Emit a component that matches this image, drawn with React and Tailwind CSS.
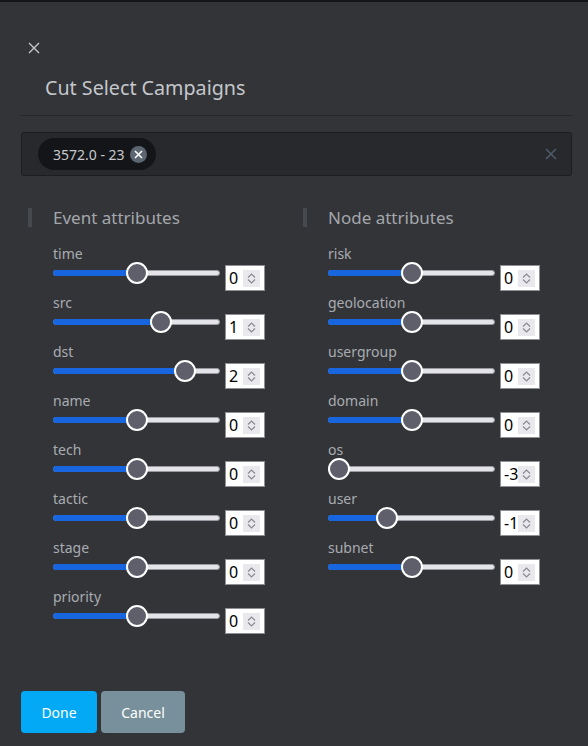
import React from "react";

const left = [
  ["time", 0],
  ["src", 1],
  ["dst", 2],
  ["name", 0],
  ["tech", 0],
  ["tactic", 0],
  ["stage", 0],
  ["priority", 0],
];
const right = [
  ["risk", 0],
  ["geolocation", 0],
  ["usergroup", 0],
  ["domain", 0],
  ["os", -3],
  ["user", -1],
  ["subnet", 0],
];

function Slider({ value }) {
  const center = 11 + ((value + 3) / 6) * 145;
  return (
    <div className="relative w-[167px] h-[24px]">
      <div className="absolute left-0 right-0 top-[9px] h-[6px] rounded-full bg-[#e3e3e8] border border-[#9a9aa3]" />
      <div
        className="absolute left-0 top-[9px] h-[6px] rounded-full bg-[#1766e0]"
        style={{ width: center }}
      />
      <div
        className="absolute top-[1px] w-[22px] h-[22px] rounded-full bg-[#5f5f6c] border-2 border-white"
        style={{ left: center - 11 }}
      />
    </div>
  );
}

function NumBox({ value }) {
  return (
    <div className="ml-[5px] mt-[4px] w-[40px] h-[26px] bg-white border border-[#8f8f96] flex items-center pl-[3px] pr-[4px]">
      <span className="flex-1 text-[16px] text-black leading-none">{value}</span>
      <div className="w-[17px] h-[17px] bg-[#e8e8ed] flex flex-col items-center justify-center gap-[1px]">
        <svg width="9" height="5" viewBox="0 0 9 5">
          <path d="M1 4.5 L4.5 1 L8 4.5" fill="none" stroke="#8a8a92" strokeWidth="1.2" />
        </svg>
        <svg width="9" height="5" viewBox="0 0 9 5">
          <path d="M1 0.5 L4.5 4 L8 0.5" fill="none" stroke="#8a8a92" strokeWidth="1.2" />
        </svg>
      </div>
    </div>
  );
}

function Column({ title, rows }) {
  return (
    <div className="flex flex-col">
      <div className="flex items-center h-[19px]">
        <div className="w-[4px] h-[19px] bg-[#46494e]" />
        <div className="ml-[21px] text-[17px] leading-[19px] text-[#a3a7ac]">{title}</div>
      </div>
      <div className="mt-[18px] pl-[25px] flex flex-col gap-[3px]">
        {rows.map(([name, v]) => (
          <div key={name} className="flex flex-col">
            <div className="h-[16px] leading-[18px] text-[14px] text-[#a8acb1]">{name}</div>
            <div className="flex items-start h-[30px]">
              <Slider value={v} />
              <NumBox value={v} />
            </div>
          </div>
        ))}
      </div>
    </div>
  );
}

export default function App() {
  return (
    <div
      className="w-[588px] h-[746px] bg-[#333438] border-t-2 border-[#151517] flex flex-col"
      style={{ fontFamily: '"Noto Sans", "Open Sans", sans-serif' }}
    >
      <div className="px-[21px] pr-[16px]">
        <div className="pt-[40px] pl-[7px] h-[58px]">
          <svg width="12" height="12" viewBox="0 0 12 12">
            <path d="M1 1 L11 11 M11 1 L1 11" stroke="#c4c7cb" strokeWidth="1.4" />
          </svg>
        </div>
        <div className="pl-[24px] text-[19.7px] leading-[28px] text-[#c4c7cb] h-[55px] pt-[14px]">
          Cut Select Campaigns
        </div>
        <div className="h-px bg-[#26272a]" />
        <div className="mt-[16px] h-[44px] rounded-[3px] bg-[#28292c] border border-[#1c1d1f] flex items-center pl-[16px] pr-[14px]">
          <div className="h-[32px] rounded-full bg-[#141518] flex items-center pl-[15px] pr-[9px]">
            <span className="text-[14px] text-[#c7cacd]">3572.0 - 23</span>
            <span className="ml-[5px] w-[17px] h-[17px] rounded-full bg-[#5b6672] flex items-center justify-center">
              <svg width="9" height="9" viewBox="0 0 9 9">
                <path d="M1 1 L8 8 M8 1 L1 8" stroke="#ffffff" strokeWidth="1.6" />
              </svg>
            </span>
          </div>
          <div className="flex-1" />
          <svg width="12" height="12" viewBox="0 0 12 12">
            <path d="M1 1 L11 11 M11 1 L1 11" stroke="#4c5a6a" strokeWidth="1.6" />
          </svg>
        </div>
        <div className="mt-[32px] pl-[7px] grid grid-cols-[275px_275px]">
          <Column title="Event attributes" rows={left} />
          <Column title="Node attributes" rows={right} />
        </div>
      </div>
      <div className="flex-1" />
      <div className="px-[21px] pb-[13px] flex gap-[4px]">
        <button className="w-[76px] h-[42px] rounded-[4px] bg-[#03a9f4] text-white text-[14px]">Done</button>
        <button className="w-[84px] h-[42px] rounded-[4px] bg-[#78909c] text-white text-[14px]">Cancel</button>
      </div>
    </div>
  );
}
